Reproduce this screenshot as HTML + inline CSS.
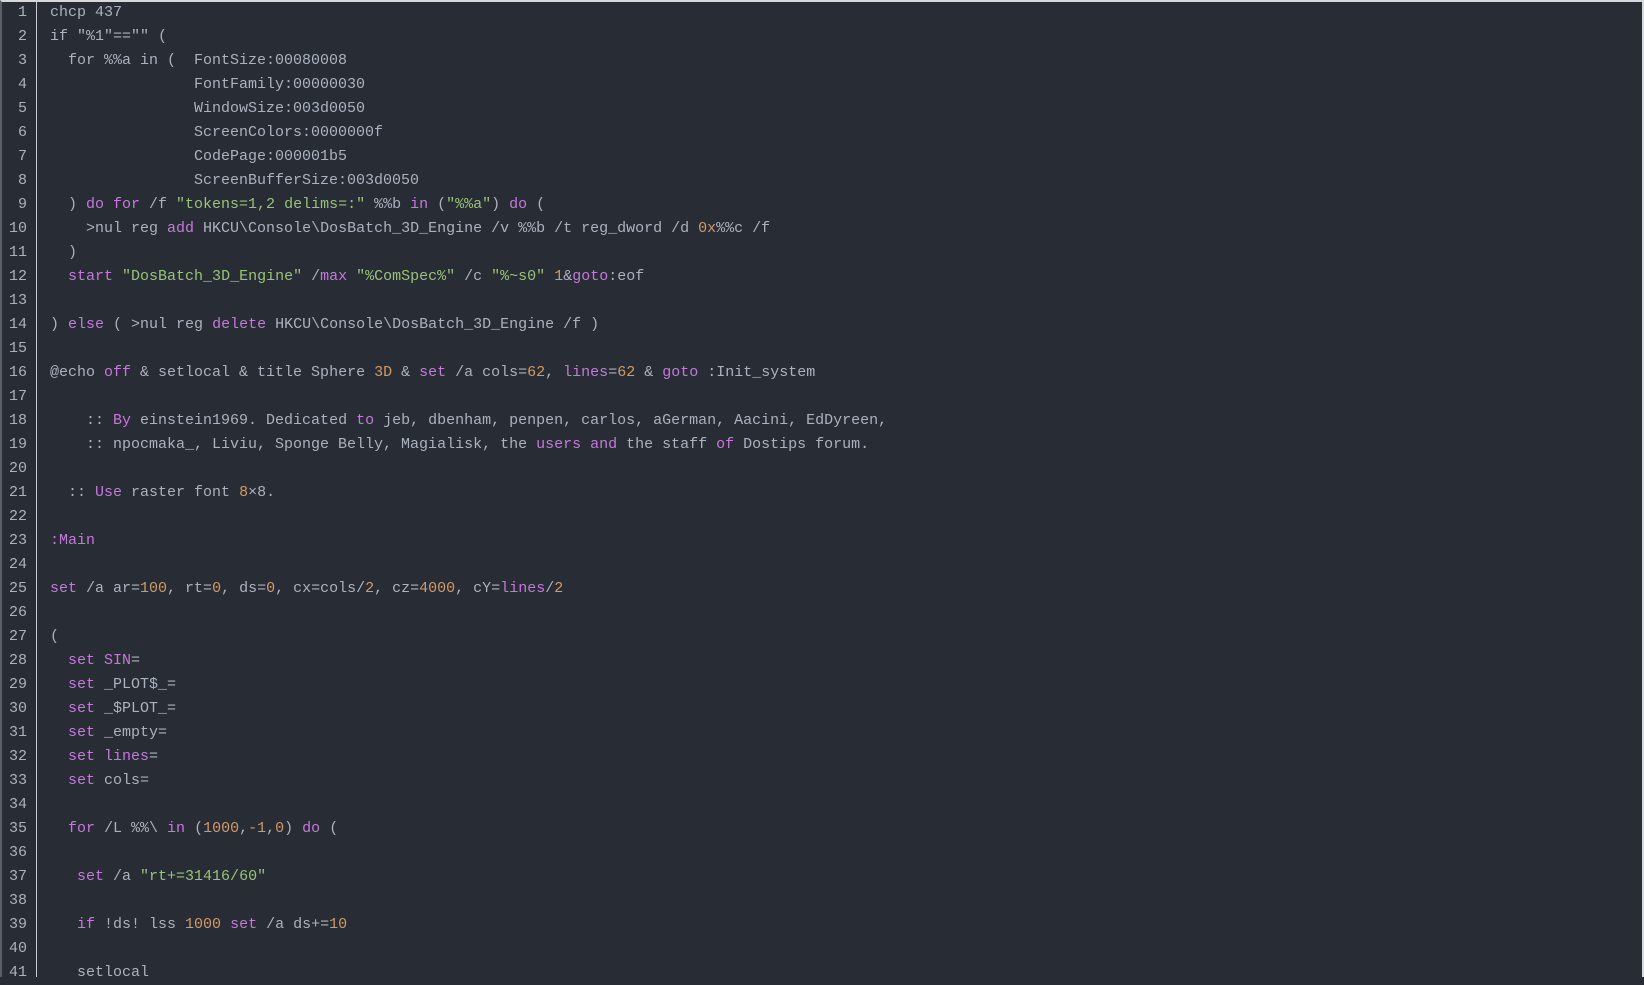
<!DOCTYPE html>
<html><head><meta charset="utf-8"><style>
html,body{margin:0;padding:0;background:#282c34;width:1644px;height:977px;overflow:hidden}
.wrap{position:absolute;left:0;top:0;width:1644px;height:977px;border-top:2px solid #d6d8dc;border-right:2px solid #d6d8dc;border-left:2px solid #5a5f68;box-sizing:border-box}
.g{position:absolute;left:36px;top:0;width:1px;height:977px;background:#c9cbd0}
pre{margin:0;position:absolute;top:1px;font-family:"Liberation Mono",monospace;font-size:15px;line-height:24px;color:#abb2bf}
.n{left:0;width:27px;text-align:right}
.c{left:50px}
.k{color:#c678dd}.s{color:#98c379}.o{color:#d19a66}
</style></head><body><div class="wrap"></div><div class="g"></div>
<pre class="n">1
2
3
4
5
6
7
8
9
10
11
12
13
14
15
16
17
18
19
20
21
22
23
24
25
26
27
28
29
30
31
32
33
34
35
36
37
38
39
40
41</pre>
<pre class="c">chcp 437
if "%1"=="" (
  for %%a in (  FontSize:00080008
                FontFamily:00000030
                WindowSize:003d0050
                ScreenColors:0000000f
                CodePage:000001b5
                ScreenBufferSize:003d0050
  ) <span class="k">do for</span> /f <span class="s">"tokens=1,2 delims=:"</span> %%b <span class="k">in</span> (<span class="s">"%%a"</span>) <span class="k">do</span> (
    &gt;nul reg <span class="k">add</span> HKCU\Console\DosBatch_3D_Engine /v %%b /t reg_dword /d <span class="o">0x</span>%%c /f
  )
  <span class="k">start</span> <span class="s">"DosBatch_3D_Engine"</span> /<span class="k">max</span> <span class="s">"%ComSpec%"</span> /c <span class="s">"%~s0"</span> <span class="o">1</span>&amp;<span class="k">goto</span>:eof

) <span class="k">else</span> ( &gt;nul reg <span class="k">delete</span> HKCU\Console\DosBatch_3D_Engine /f )

@echo <span class="k">off</span> &amp; setlocal &amp; title Sphere <span class="o">3D</span> &amp; <span class="k">set</span> /a cols=<span class="o">62</span>, <span class="k">lines</span>=<span class="o">62</span> &amp; <span class="k">goto</span> :Init_system

    :: <span class="k">By</span> einstein1969. Dedicated <span class="k">to</span> jeb, dbenham, penpen, carlos, aGerman, Aacini, EdDyreen,
    :: npocmaka_, Liviu, Sponge Belly, Magialisk, the <span class="k">users and</span> the staff <span class="k">of</span> Dostips forum.

  :: <span class="k">Use</span> raster font <span class="o">8</span>×8.

<span class="k">:Main</span>

<span class="k">set</span> /a ar=<span class="o">100</span>, rt=<span class="o">0</span>, ds=<span class="o">0</span>, cx=cols/<span class="o">2</span>, cz=<span class="o">4000</span>, cY=<span class="k">lines</span>/<span class="o">2</span>

(
  <span class="k">set SIN</span>=
  <span class="k">set</span> _PLOT$_=
  <span class="k">set</span> _$PLOT_=
  <span class="k">set</span> _empty=
  <span class="k">set lines</span>=
  <span class="k">set</span> cols=

  <span class="k">for</span> /L %%\ <span class="k">in</span> (<span class="o">1000</span>,<span class="o">-1</span>,<span class="o">0</span>) <span class="k">do</span> (

   <span class="k">set</span> /a <span class="s">"rt+=31416/60"</span>

   <span class="k">if</span> !ds! lss <span class="o">1000</span> <span class="k">set</span> /a ds+=<span class="o">10</span>

   setlocal</pre>
</body></html>
